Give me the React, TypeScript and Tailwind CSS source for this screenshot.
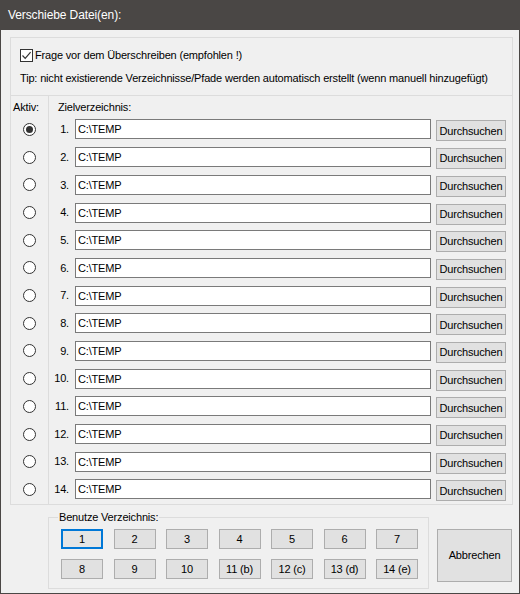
import { useState } from "react";

const rows = Array.from({ length: 14 }, (_, i) => i + 1);
const targets = ["1", "2", "3", "4", "5", "6", "7", "8", "9", "10", "11 (b)", "12 (c)", "13 (d)", "14 (e)"];

function CheckBox({ checked }: { checked: boolean }) {
  return (
    <span className="grid h-[13px] w-[13px] shrink-0 place-items-center border border-[#333333] bg-white">
      {checked && (
        <svg width="11" height="11" viewBox="0 0 11 11" fill="none">
          <path d="M1.5 5.5 L4.2 8.3 L9.6 2.2" stroke="#333333" strokeWidth="1.2" />
        </svg>
      )}
    </span>
  );
}

function Radio({ on, onClick }: { on: boolean; onClick: () => void }) {
  return (
    <button
      onClick={onClick}
      className="grid h-[13px] w-[13px] place-items-center rounded-full border border-[#333333] bg-white"
    >
      {on && <span className="h-[7px] w-[7px] rounded-full bg-[#333333]" />}
    </button>
  );
}

export default function App() {
  const [active, setActive] = useState(1);
  const [ask, setAsk] = useState(true);

  return (
    <div
      className="flex h-[594px] w-[520px] flex-col border-x border-b border-[#4a4745] bg-[#f0f0f0] text-[11px] tracking-[-0.17px] text-black"
      style={{ fontFamily: '"Liberation Sans", Arial, sans-serif' }}
    >
      <header className="flex h-[30px] shrink-0 items-center bg-[#4a4745] pl-[7px] text-[12px] tracking-[-0.1px] text-white">
        Verschiebe Datei(en):
      </header>

      <div className="flex flex-1 flex-col pl-[9px] pr-[6px] pt-[7px]">
        {/* options */}
        <div className="flex h-[59px] flex-col border border-[#dcdcdc] pl-[9px]">
          <label className="mt-[11px] flex cursor-default items-center gap-[2px]" onClick={() => setAsk((v) => !v)}>
            <CheckBox checked={ask} />
            <span className="leading-[13px]">Frage vor dem Überschreiben (empfohlen !)</span>
          </label>
          <div className="mt-[10px] leading-[13px]">
            Tip: nicht existierende Verzeichnisse/Pfade werden automatisch erstellt (wenn manuell hinzugefügt)
          </div>
        </div>

        {/* active column + target folders */}
        <div className="-mt-px flex h-[410px]">
          <div className="flex w-[39px] shrink-0 flex-col border border-[#dcdcdc]">
            <div className="h-[19.6px] pl-[2px] pt-[5px] leading-[13px]">Aktiv:</div>
            {rows.map((n) => (
              <div key={n} className="flex h-[27.7px] items-center justify-center">
                <Radio on={active === n} onClick={() => setActive(n)} />
              </div>
            ))}
          </div>
          <div className="-ml-px flex flex-1 flex-col border border-[#dcdcdc]">
            <div className="h-[19.6px] pl-[9px] pt-[5px] leading-[13px]">Zielverzeichnis:</div>
            {rows.map((n) => (
              <div key={n} className="flex h-[27.7px] items-center">
                <span className="w-[26px] pr-[6px] text-right">{n}.</span>
                <input
                  defaultValue="C:\TEMP"
                  className="h-[20px] w-[356px] border border-[#7a7a7a] bg-white px-[2px] text-[11px] tracking-[-0.17px] outline-none"
                />
                <button className="ml-[5px] mt-[3px] h-[21px] w-[70px] border border-[#adadad] bg-[#e1e1e1] text-[11px]">
                  Durchsuchen
                </button>
              </div>
            ))}
          </div>
        </div>

        {/* quick select + cancel */}
        <div className="flex">
          <fieldset className="ml-[38px] mt-[6px] h-[78px] w-[381px] min-w-0 shrink-0 border border-[#dcdcdc] px-[12px]">
            <legend className="ml-[-3px] px-px leading-[13px]">Benutze Verzeichnis:</legend>
            <div className="mt-[5px] grid grid-cols-[repeat(7,42px)] gap-x-[10.5px] gap-y-[10px]">
              {targets.map((t, i) => (
                <button
                  key={t}
                  onClick={() => setActive(i + 1)}
                  className={
                    i === 0
                      ? "h-[20px] border-2 border-[#0078d7] bg-[#e5e5e5] text-[11px]"
                      : "h-[20px] border border-[#adadad] bg-[#e1e1e1] text-[11px]"
                  }
                >
                  {t}
                </button>
              ))}
            </div>
          </fieldset>
          <button className="ml-[8px] mt-[24px] h-[53px] w-[75px] border border-[#adadad] bg-[#e1e1e1] text-[11px]">
            Abbrechen
          </button>
        </div>
      </div>
    </div>
  );
}
